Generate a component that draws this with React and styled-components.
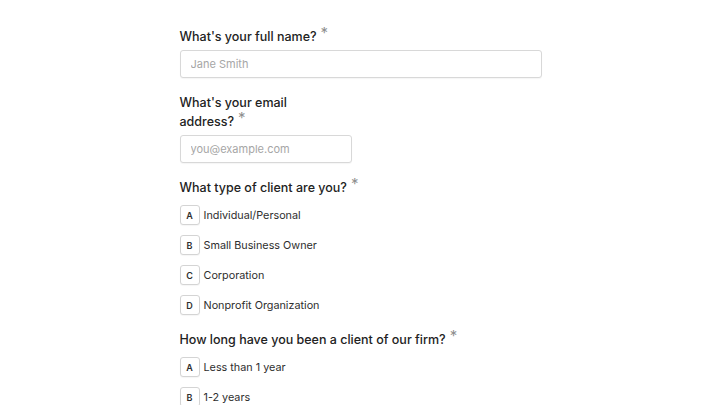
import React from 'react';
import styled, { createGlobalStyle } from 'styled-components';

const GlobalStyle = createGlobalStyle`
  html, body {
    margin: 0;
    padding: 0;
    background: #ffffff;
  }
  body {
    font-family: Inter, "Liberation Sans", sans-serif;
    color: #222222;
    -webkit-font-smoothing: antialiased;
  }
`;

const questions = [
  {
    title: 'What type of client are you?',
    options: ['Individual/Personal', 'Small Business Owner', 'Corporation', 'Nonprofit Organization'],
  },
  {
    title: 'How long have you been a client of our firm?',
    options: ['Less than 1 year', '1-2 years', '3-5 years', 'More than 5 years'],
  },
];

function App() {
  return (
    <>
      <GlobalStyle />
      <Page>
        <Form>
          <Field>
            <Label>
              What's your full name?<Required>*</Required>
            </Label>
            <Input placeholder="Jane Smith" />
          </Field>
          <Field half>
            <Label>
              What's your email address?<Required>*</Required>
            </Label>
            <Input type="email" placeholder="you@example.com" />
          </Field>
          {questions.map(q => (
            <Field key={q.title}>
              <Label>
                {q.title}
                <Required>*</Required>
              </Label>
              <Options>
                {q.options.map((opt, i) => (
                  <Option key={opt}>
                    <Key>{String.fromCharCode(65 + i)}</Key>
                    {opt}
                  </Option>
                ))}
              </Options>
            </Field>
          ))}
        </Form>
      </Page>
    </>
  );
}

const Page = styled.div`
  display: flex;
  justify-content: center;
  padding-top: 27px;
  padding-left: 1px;
  height: 405px;
  box-sizing: border-box;
  overflow: hidden;
`;

const Form = styled.form`
  width: 362px;
  display: flex;
  flex-direction: column;
  gap: 15px;
`;

const Field = styled.div`
  display: flex;
  flex-direction: column;
  width: ${props => (props.half ? '172px' : '100%')};
`;

const Label = styled.label`
  font-size: 12.5px;
  font-weight: 500;
  line-height: 19px;
  color: #222222;
  margin-bottom: 4px;
  padding-right: 24px;
`;

const Required = styled.span`
  color: #8f8f8f;
  font-size: 15px;
  font-weight: 400;
  line-height: 0;
  margin-left: 4px;
  position: relative;
  top: -3px;
`;

const Input = styled.input`
  box-sizing: border-box;
  width: 100%;
  height: 28px;
  padding: 0 10px;
  border: 1px solid #d8d8d8;
  border-radius: 3px;
  box-shadow: 0 1px 1px rgba(0, 0, 0, 0.04);
  font-family: inherit;
  font-size: 11px;
  color: #222222;
  outline: none;

  &::placeholder {
    color: #a6a6a6;
  }
`;

const Options = styled.div`
  display: flex;
  flex-direction: column;
  gap: 10px;
  margin-top: 4px;
`;

const Option = styled.div`
  display: flex;
  align-items: center;
  gap: 4px;
  height: 20px;
  font-size: 10.8px;
  color: #2e2e2e;
`;

const Key = styled.span`
  box-sizing: border-box;
  display: inline-flex;
  align-items: center;
  justify-content: center;
  flex: none;
  width: 20px;
  height: 20px;
  border: 1px solid #d4d4d4;
  border-radius: 3px;
  box-shadow: 0 1px 1px rgba(0, 0, 0, 0.04);
  font-size: 9px;
  font-weight: 600;
  color: #2e2e2e;
  background: #ffffff;
`;

export default App;
